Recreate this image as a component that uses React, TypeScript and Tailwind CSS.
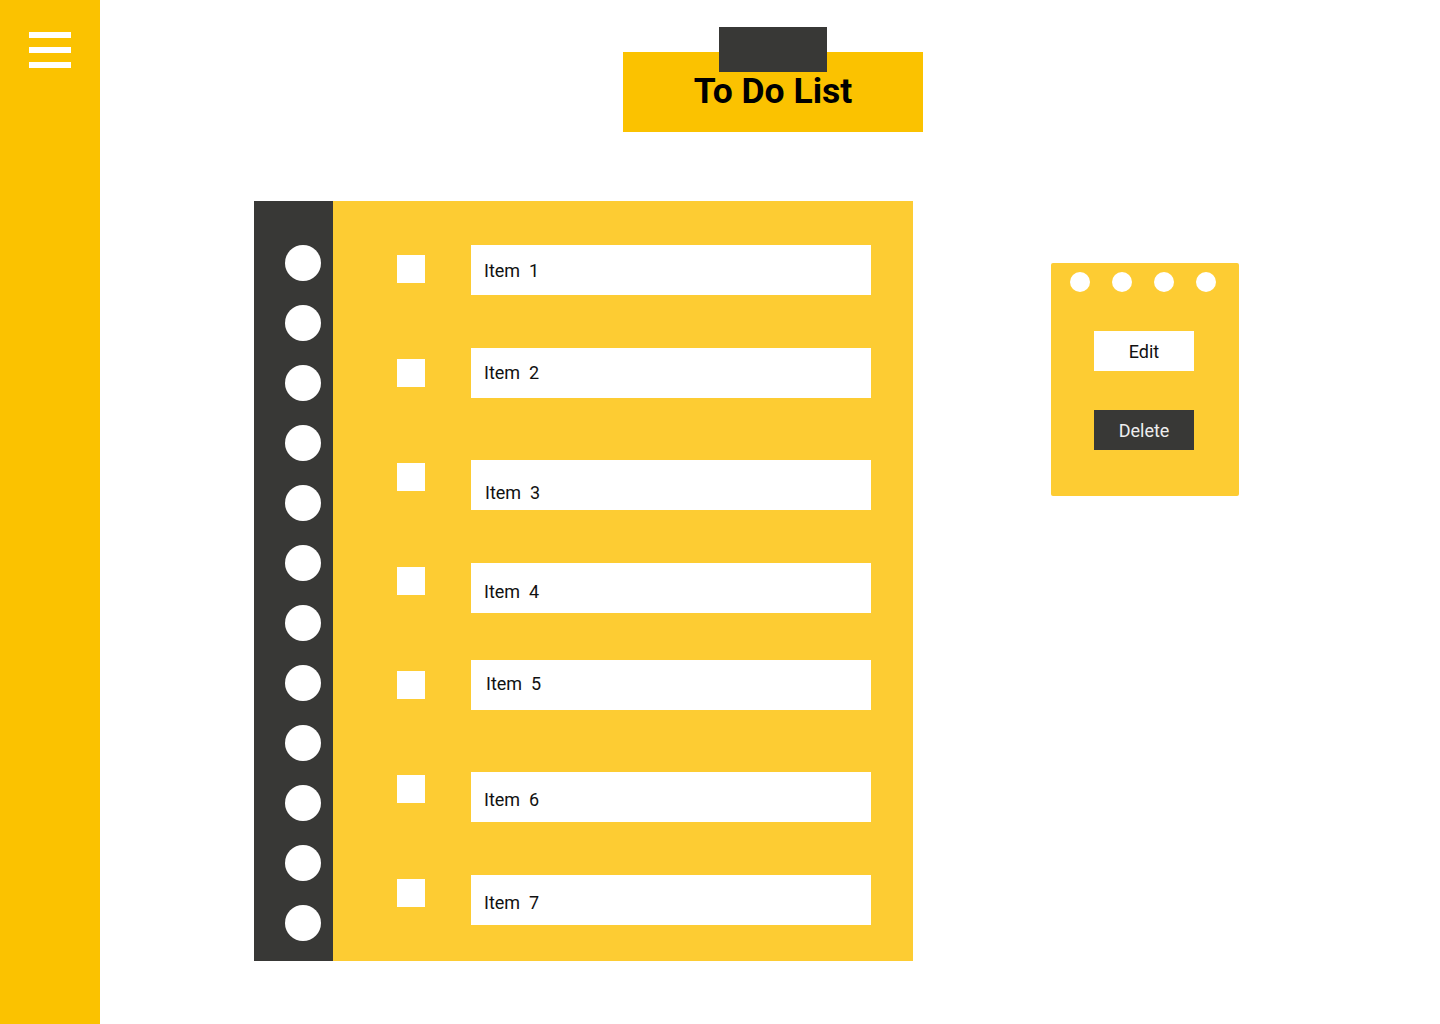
import { FC } from "react";

// Row layout of the notebook (offsets taken from the mockup)
interface TodoRow {
	label: string;
	inputOffset: string; // margin-top of the text box inside the row
	textShift: string; // small vertical nudge for the label
	textPad: string;
}

const rows: TodoRow[] = [
	{ label: "Item  1", inputOffset: "mt-[1px]", textShift: "translate-y-0", textPad: "pl-[13px]" },
	{ label: "Item  2", inputOffset: "mt-0", textShift: "-translate-y-px", textPad: "pl-[13px]" },
	{ label: "Item  3", inputOffset: "mt-[8px]", textShift: "translate-y-[7px]", textPad: "pl-[14px]" },
	{ label: "Item  4", inputOffset: "mt-[7px]", textShift: "translate-y-[3px]", textPad: "pl-[13px]" },
	{ label: "Item  5", inputOffset: "mt-0", textShift: "-translate-y-[2px]", textPad: "pl-[15px]" },
	{ label: "Item  6", inputOffset: "mt-[8px]", textShift: "translate-y-[2px]", textPad: "pl-[13px]" },
	{ label: "Item  7", inputOffset: "mt-[7px]", textShift: "translate-y-[2px]", textPad: "pl-[13px]" },
];

const Sidebar: FC = () => (
	<aside className="w-[100px] min-h-[1024px] bg-[#fbc200] shrink-0">
		<div className="flex flex-col gap-[9px] pt-[32px] pl-[29px]">
			<span className="block w-[42px] h-[6px] bg-white" />
			<span className="block w-[42px] h-[6px] bg-white" />
			<span className="block w-[42px] h-[6px] bg-white" />
		</div>
	</aside>
);

const Title: FC = () => (
	<div className="relative ml-[523px] mt-[52px] w-[300px] h-[80px] bg-[#fbc200] flex items-center justify-center">
		{/* clip on top of the label */}
		<div className="absolute left-[96px] -top-[25px] w-[108px] h-[45px] bg-[#383836]" />
		<h1 className="text-[35.5px] font-bold text-black leading-none">To Do List</h1>
	</div>
);

const Notebook: FC = () => {
	const holes = Array.from({ length: 12 });
	return (
		<div className="flex ml-[154px] mt-[69px] h-[760px]">
			{/* spine */}
			<div className="w-[79px] bg-[#383836] flex flex-col items-start gap-[24px] pt-[44px] pl-[31px]">
				{holes.map((_, i) => (
					<span key={i} className="block w-[36px] h-[36px] rounded-full bg-white shrink-0" />
				))}
			</div>

			{/* page */}
			<div className="w-[580px] bg-[#fdcc33] pt-[43px] overflow-hidden">
				{rows.map((row, i) => (
					<div key={`${row.label}_${i}`} className="flex items-start h-[104px] pl-[64px]">
						<span className="block w-[28px] h-[28px] bg-white mt-[11px] shrink-0" />
						<div className={`ml-[46px] w-[400px] h-[50px] bg-white flex items-center ${row.inputOffset} ${row.textPad}`}>
							<span className={`text-[18px] text-[#111] whitespace-pre ${row.textShift}`}>{row.label}</span>
						</div>
					</div>
				))}
			</div>
		</div>
	);
};

const ActionPanel: FC = () => (
	<div className="ml-[138px] mt-[131px] w-[188px] h-[233px] bg-[#fdcc33] rounded-[2px] pt-[9px]">
		<div className="flex gap-[22px] pl-[19px]">
			<span className="block w-[20px] h-[20px] rounded-full bg-white" />
			<span className="block w-[20px] h-[20px] rounded-full bg-white" />
			<span className="block w-[20px] h-[20px] rounded-full bg-white" />
			<span className="block w-[20px] h-[20px] rounded-full bg-white" />
		</div>
		<div className="flex flex-col gap-[39px] pl-[43px] mt-[39px]">
			<button className="w-[100px] h-[40px] bg-white text-[18px] text-[#111]">Edit</button>
			<button className="w-[100px] h-[40px] bg-[#383836] text-[18px] text-[#eeeeee]">Delete</button>
		</div>
	</div>
);

export default function App() {
	return (
		<div className="flex w-[1440px] min-h-[1024px] bg-white font-['Roboto',sans-serif]">
			<Sidebar />
			<main className="flex-1">
				<Title />
				<div className="flex items-start">
					<Notebook />
					<ActionPanel />
				</div>
			</main>
		</div>
	);
}
